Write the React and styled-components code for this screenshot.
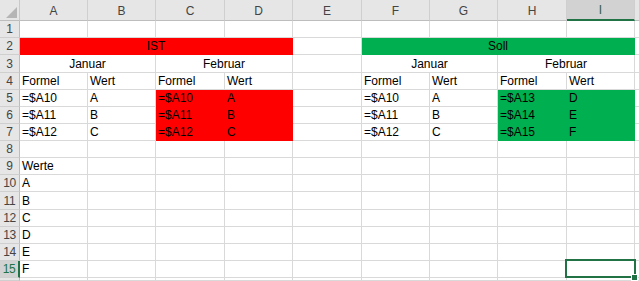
import React from 'react';
import styled, { createGlobalStyle, css } from 'styled-components';

const GlobalStyle = createGlobalStyle`
  html, body {
    margin: 0;
    padding: 0;
    background: #ffffff;
    overflow: hidden;
  }
  body {
    font-family: "Liberation Sans", Arial, sans-serif;
  }
`;

const RED = '#ff0000';
const GREEN = '#00b050';
const GRID = '#d9d9d9';
const SELECT = '#217346';

// column widths in px, J is the clipped column at the right edge
const colWidths = [68, 68, 69, 68, 69, 68, 68, 69, 68];
const rowHeights = [17, 17, 18, 17, 17, 17, 17, 17, 17, 17, 18, 17, 17, 17, 17];
const colNames = ['A', 'B', 'C', 'D', 'E', 'F', 'G', 'H', 'I', ''];

const Sheet = styled.div`
  display: grid;
  grid-template-columns: 20px ${colWidths.map((w) => w + 'px').join(' ')} 1fr;
  grid-template-rows: 21px ${rowHeights.map((h) => h + 'px').join(' ')} 1fr;
  width: 640px;
  height: 281px;
  overflow: hidden;
  background: #fff;
`;

const Corner = styled.div`
  position: relative;
  background: #e6e6e6;
  border-right: 1px solid #c9c9c9;
  border-bottom: 1px solid #bdbdbd;
  box-sizing: border-box;

  &::after {
    content: '';
    position: absolute;
    right: 2px;
    bottom: 2px;
    width: 0;
    height: 0;
    border-left: 11px solid transparent;
    border-bottom: 11px solid #b5b5b5;
  }
`;

const ColHead = styled.div`
  display: flex;
  align-items: center;
  justify-content: center;
  box-sizing: border-box;
  padding-top: 1px;
  background: ${(p) => (p.$active ? '#d2d2d2' : '#e6e6e6')};
  border-right: 1px solid #cfcfcf;
  border-bottom: ${(p) => (p.$active ? `2px solid ${SELECT}` : '1px solid #bdbdbd')};
  color: ${(p) => (p.$active ? '#2f5f43' : '#444')};
  font-size: 12px;
`;

const RowHead = styled.div`
  display: flex;
  align-items: flex-end;
  justify-content: center;
  box-sizing: border-box;
  padding-bottom: 1px;
  background: ${(p) => (p.$active ? '#d2d2d2' : '#e6e6e6')};
  border-bottom: 1px solid #cfcfcf;
  border-right: ${(p) => (p.$active ? `2px solid ${SELECT}` : '1px solid #bdbdbd')};
  color: ${(p) => (p.$active ? SELECT : '#444')};
  font-size: 12px;
  letter-spacing: -0.3px;
`;

const Cell = styled.div`
  position: relative;
  display: flex;
  align-items: flex-end;
  justify-content: ${(p) => (p.$center ? 'center' : 'flex-start')};
  box-sizing: border-box;
  padding: 0 2px 1px;
  grid-column: span ${(p) => p.$span || 1};
  font-size: 12px;
  color: #000;
  white-space: nowrap;
  overflow: visible;
  background: ${(p) => p.$fill || '#fff'};
  border-right: 1px solid ${(p) => p.$fill || GRID};
  border-bottom: 1px solid ${(p) => p.$fill || GRID};

  ${(p) =>
    p.$selected &&
    css`
      &::after {
        content: '';
        position: absolute;
        left: -2px;
        top: -2px;
        right: -2px;
        bottom: -1px;
        border: 2px solid ${SELECT};
        z-index: 2;
      }
      &::before {
        content: '';
        position: absolute;
        right: -4px;
        bottom: -4px;
        width: 5px;
        height: 5px;
        background: ${SELECT};
        border: 1px solid #fff;
        z-index: 3;
      }
    `}
`;

// row data: list of [text, span, fill, center]
const blank = (n) => Array.from({ length: n }, () => ['']);

const rows = [
  blank(10),
  [['IST', 4, RED, true], [''], ['Soll', 4, GREEN, true], ['']],
  [['Januar', 2, null, true], ['Februar', 2, null, true], [''], ['Januar', 2, null, true], ['Februar', 2, null, true], ['']],
  [['Formel'], ['Wert'], ['Formel'], ['Wert'], [''], ['Formel'], ['Wert'], ['Formel'], ['Wert'], ['']],
  [['=$A10'], ['A'], ['=$A10', 1, RED], ['A', 1, RED], [''], ['=$A10'], ['A'], ['=$A13', 1, GREEN], ['D', 1, GREEN], ['']],
  [['=$A11'], ['B'], ['=$A11', 1, RED], ['B', 1, RED], [''], ['=$A11'], ['B'], ['=$A14', 1, GREEN], ['E', 1, GREEN], ['']],
  [['=$A12'], ['C'], ['=$A12', 1, RED], ['C', 1, RED], [''], ['=$A12'], ['C'], ['=$A15', 1, GREEN], ['F', 1, GREEN], ['']],
  blank(10),
  [['Werte'], ...blank(9)],
  [['A'], ...blank(9)],
  [['B'], ...blank(9)],
  [['C'], ...blank(9)],
  [['D'], ...blank(9)],
  [['E'], ...blank(9)],
  [['F'], ...blank(9)],
  blank(10),
];

const App = () => {
  return (
    <>
      <GlobalStyle />
      <Sheet>
        <Corner />
        {colNames.map((c, i) => (
          <ColHead key={'h' + i} $active={c === 'I'}>
            {c}
          </ColHead>
        ))}
        {rows.map((cells, r) => {
          let col = 0;
          return (
            <React.Fragment key={r}>
              <RowHead $active={r === 14}>{r < 15 ? r + 1 : ''}</RowHead>
              {cells.map(([text, span, fill, center], i) => {
                const here = col;
                col += span || 1;
                return (
                  <Cell
                    key={i}
                    $span={span}
                    $fill={fill}
                    $center={center}
                    $selected={r === 14 && here === 8}
                  >
                    {text}
                  </Cell>
                );
              })}
            </React.Fragment>
          );
        })}
      </Sheet>
    </>
  );
};

export default App;
